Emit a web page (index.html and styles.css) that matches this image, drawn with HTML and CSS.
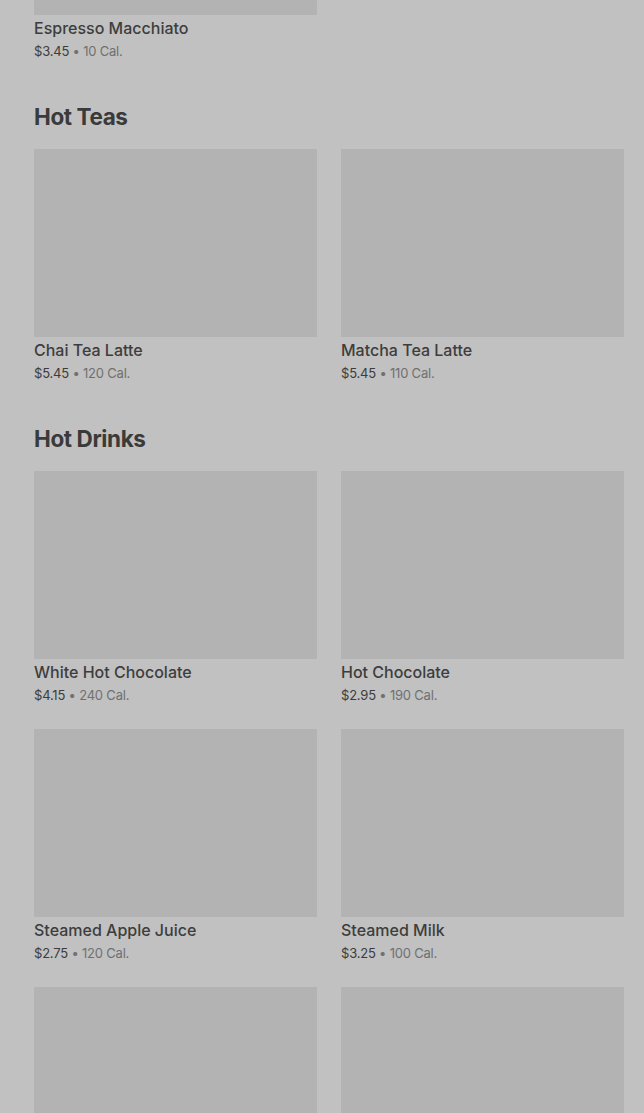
FILE: index.html
```html
<!DOCTYPE html>
<html lang="en">
<head>
    <meta charset="UTF-8">
    <meta name="viewport" content="width=device-width, initial-scale=1.0">
    <title>Menu</title>
    <link rel="stylesheet" href="styles.css">
</head>
<body>
    <div class="menu">
        <section class="menu-section first">
            <div class="item-grid">
                <div class="item">
                    <div class="item-image"></div>
                    <div class="item-name">Espresso Macchiato</div>
                    <div class="item-meta"><span class="price">$3.45</span> • 10 Cal.</div>
                </div>
            </div>
        </section>

        <section class="menu-section">
            <h2>Hot Teas</h2>
            <div class="item-grid">
                <div class="item">
                    <div class="item-image"></div>
                    <div class="item-name">Chai Tea Latte</div>
                    <div class="item-meta"><span class="price">$5.45</span> • 120 Cal.</div>
                </div>
                <div class="item">
                    <div class="item-image"></div>
                    <div class="item-name">Matcha Tea Latte</div>
                    <div class="item-meta"><span class="price">$5.45</span> • 110 Cal.</div>
                </div>
            </div>
        </section>

        <section class="menu-section">
            <h2>Hot Drinks</h2>
            <div class="item-grid">
                <div class="item">
                    <div class="item-image"></div>
                    <div class="item-name">White Hot Chocolate</div>
                    <div class="item-meta"><span class="price">$4.15</span> • 240 Cal.</div>
                </div>
                <div class="item">
                    <div class="item-image"></div>
                    <div class="item-name">Hot Chocolate</div>
                    <div class="item-meta"><span class="price">$2.95</span> • 190 Cal.</div>
                </div>
                <div class="item">
                    <div class="item-image"></div>
                    <div class="item-name">Steamed Apple Juice</div>
                    <div class="item-meta"><span class="price">$2.75</span> • 120 Cal.</div>
                </div>
                <div class="item">
                    <div class="item-image"></div>
                    <div class="item-name">Steamed Milk</div>
                    <div class="item-meta"><span class="price">$3.25</span> • 100 Cal.</div>
                </div>
                <!-- next row is below the fold, only the images show -->
                <div class="item">
                    <div class="item-image"></div>
                </div>
                <div class="item">
                    <div class="item-image"></div>
                </div>
            </div>
        </section>
    </div>
</body>
</html>
```

FILE: styles.css
```css
body {
    margin: 0;
    background-color: #c1c1c1;
    font-family: Inter, "Noto Sans", sans-serif;
    color: #3c3c3c;
    overflow: hidden;
}

/* page is scrolled: first card's image is mostly above the fold */
.menu {
    margin-top: -173px;
    padding: 0 20px 0 34px;
}

.menu-section {
    padding-top: 40px;
}
.menu-section.first {
    padding-top: 0;
}

.menu-section h2 {
    margin: 0 0 16px 0;
    font-size: 22.5px;
    line-height: 32px;
    font-weight: 700;
    letter-spacing: -0.4px;
    color: #3a3a3a;
}

.item-grid {
    display: grid;
    grid-template-columns: 1fr 1fr;
    gap: 24px;
}

.item-image {
    height: 188px;
    background-color: #b3b3b3;
}

.item-name {
    padding-top: 1px;
    font-size: 16px;
    line-height: 24px;
    font-weight: 500;
    color: #3d3d3d;
}

.item-meta {
    margin-top: 1px;
    font-size: 13px;
    line-height: 20px;
    letter-spacing: -0.2px;
    color: #707070;
}
.price {
    color: #3c3c3c;
}
```
